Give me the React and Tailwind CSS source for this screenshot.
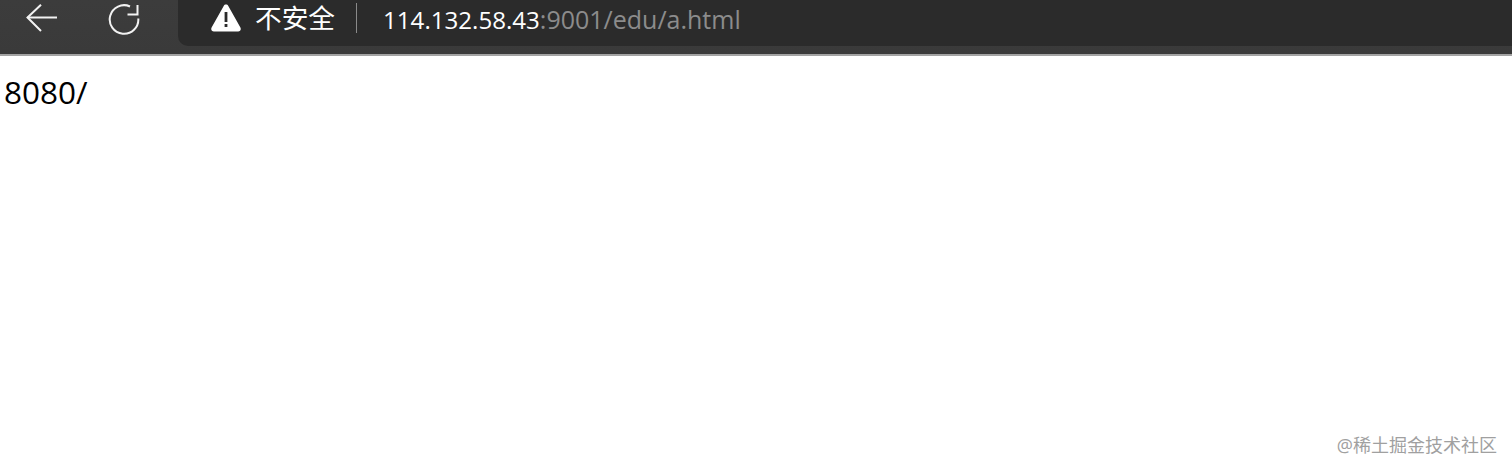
const FONT = "font-['Open_Sans','Noto_Sans_CJK_SC',sans-serif]"

function BackIcon() {
  return (
    <svg width="32" height="28" viewBox="0 0 32 28" fill="none" stroke="#f2f2f2" strokeWidth="2">
      <path d="M1.500 13.500H31" />
      <path d="M15 0.700L1.500 13.500L15 27" />
    </svg>
  )
}

function ReloadIcon() {
  return (
    <svg width="32" height="32" viewBox="0 0 32 32" fill="none" stroke="#f2f2f2" strokeWidth="2">
      <path d="M22 2.500A14.300 14.300 0 1 0 30.300 14.500" />
      <path d="M29.500 1V10.500H19.500" />
    </svg>
  )
}

function WarningIcon() {
  return (
    <svg width="30" height="28" viewBox="0 0 30 28">
      <path d="M15 0.5C16 0.5 16.800 1 17.300 1.900L29.400 23.600C30.400 25.400 29.200 27.500 27.100 27.500H2.900C0.800 27.500 -0.400 25.400 0.600 23.600L12.700 1.900C13.200 1 14 0.500 15 0.500Z" fill="#ffffff" />
      <rect x="13.600" y="8" width="2.800" height="10" fill="#2b2b2b" />
      <rect x="13.600" y="20" width="2.800" height="3" fill="#2b2b2b" />
    </svg>
  )
}

export default function App() {
  return (
    <div className={`${FONT} h-[469px] bg-white flex flex-col overflow-hidden`}>
      {/* toolbar */}
      <div className="h-[56px] shrink-0 flex items-start border-b-2 border-[#a3a3a3] bg-gradient-to-b from-[#3c3c3c] to-[#3a3a3a]">
        <div className="w-[178px] shrink-0 flex items-start pl-[26px] pt-[4px]">
          <BackIcon />
          <div className="ml-[50px]">
            <ReloadIcon />
          </div>
        </div>
        <div className="flex-1 h-[46px] bg-[#2b2b2b] rounded-bl-[10px] flex items-center pl-[33px] pb-[11px]">
          <WarningIcon />
          <span className="ml-[14px] text-[26.700px] leading-[34px] text-white">不安全</span>
          <div className="ml-[21px] w-px h-[30px] bg-[#8a8a8a]" />
          <span className="ml-[26px] mt-[3px] text-[24.100px] leading-[34px] text-white whitespace-nowrap">
            114.132.58.43<span className="text-[25px] text-[#8c8c8c]">:9001/edu/a.html</span>
          </span>
        </div>
      </div>

      {/* page */}
      <div className="flex-1 flex flex-col justify-between pl-[4px] pr-[15px] pt-[16px] pb-[12px]">
        <p className="text-[31.500px] leading-[40px] text-black">8080/</p>
        <p className="self-end text-[18px] leading-[24px] text-[#a0a0a0]">@稀土掘金技术社区</p>
      </div>
    </div>
  )
}
